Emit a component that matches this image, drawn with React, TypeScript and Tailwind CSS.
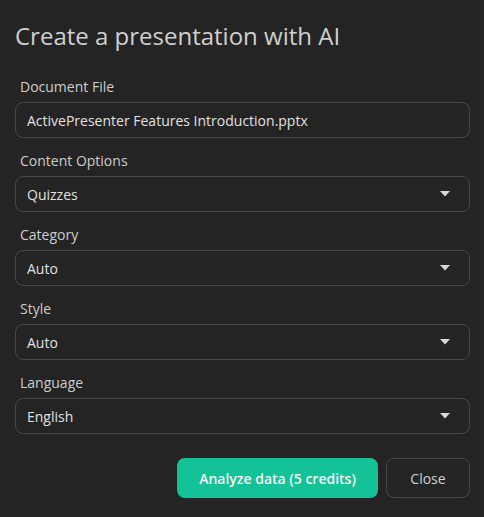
import React from 'react';

const SELECTS = [
    { label: 'Content Options', value: 'Quizzes' },
    { label: 'Category', value: 'Auto' },
    { label: 'Style', value: 'Auto' },
    { label: 'Language', value: 'English' },
];

function Caret() {
    return (
        <svg width="10" height="6" viewBox="0 0 10 6" className="shrink-0">
            <path d="M0 0h10L5 5.5z" fill="#d9d9d9" />
        </svg>
    );
}

export default function App() {
    return (
        <div
            className="min-h-[517px] w-[484px] bg-[#242424] pl-[15px] pr-[14px] pt-[20px] text-[#d4d4d4]"
            style={{ fontFamily: '"Open Sans", "Noto Sans", sans-serif' }}
        >
            <h1 className="text-[24px] leading-[32px] text-[#cfcfcf]">Create a presentation with AI</h1>

            <div className="mt-[25px]">
                <div className="px-[5px] text-[14px] leading-[20px] text-[#cccccc]">Document File</div>
                <div className="mt-[5px] flex h-[36px] items-center rounded-[8px] border border-[#474747] px-[11px] text-[14px] text-[#e0e0e0]">
                    ActivePresenter Features Introduction.pptx
                </div>
            </div>

            {SELECTS.map((s) => (
                <div key={s.label} className="mt-[13px]">
                    <div className="px-[5px] text-[14px] leading-[20px] text-[#cccccc]">{s.label}</div>
                    <div className="mt-[5px] flex h-[36px] items-center justify-between rounded-[8px] border border-[#474747] pl-[11px] pr-[19px] text-[14px] text-[#e0e0e0]">
                        <span>{s.value}</span>
                        <Caret />
                    </div>
                </div>
            ))}

            <div className="mt-[24px] flex justify-end gap-[8px]">
                <button className="h-[40px] w-[201px] rounded-[8px] bg-[#14c297] text-[14px] font-semibold text-[#f5f5f5]">
                    Analyze data (5 credits)
                </button>
                <button className="h-[40px] w-[84px] rounded-[8px] border border-[#474747] text-[14px] text-[#cfcfcf]">
                    Close
                </button>
            </div>
        </div>
    );
}
